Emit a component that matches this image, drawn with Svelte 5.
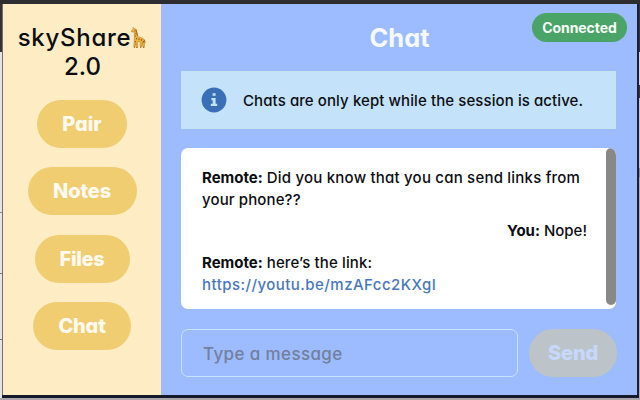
<script>
  const tabs = [
    { label: 'Pair', width: 90, spacing: -0.1 },
    { label: 'Notes', width: 109, spacing: -0.1 },
    { label: 'Files', width: 95, spacing: -0.3 },
    { label: 'Chat', width: 98, spacing: -0.2 }
  ];
</script>

<div class="desktop">
  <main class="window">
    <aside>
      <h1>
        <span class="brand">skyShare<svg class="giraffe" viewBox="0 0 15 22" aria-hidden="true">
          <path d="M2 1.2 3 2.6 5 3.2 6.6 10.5 12 12.2 13.7 15.5 13.2 21.2H11.9L11.5 16.5 10.3 21H9L9.2 16 6.8 15.4 6.5 21.5H5.2L4.8 16.5 4 21H2.8L3.4 12 3.2 6 .6 5.9.3 4.8 2.2 3Z" fill="#eab340" stroke="#b77720" stroke-width=".5" />
          <path d="M4 4.5v1M5 7v1.2M4.3 9.5v1M5.5 12v1.3M8 12.5v1.3M10.3 13.3v1.4M12.4 15v1.4M4.2 15v1" stroke="#8e4d17" stroke-width="1.1" />
          <path d="M5 3.5 6.8 10M13.2 13.5l1 3M2.9 21.3h1.2M5.2 21.6h1.4M9 21.3h1.3M12 21.3h1.3" stroke="#98561c" stroke-width=".8" fill="none" />
        </svg></span>
        <span class="version">2.0</span>
      </h1>
      <nav>
        {#each tabs as tab}
          <button style:width="{tab.width}px" style:letter-spacing="{tab.spacing}px">{tab.label}</button>
        {/each}
      </nav>
    </aside>
    <section>
      <header><h2>Chat</h2><span class="status">Connected</span></header>
      <div class="notice">
        <svg width="26" height="26" viewBox="0 0 26 26" aria-hidden="true">
          <circle cx="13" cy="13" r="12.4" fill="#386fb7" />
          <path d="M11.6 6.2h3v2.5h-3zM10.4 11h4.2v5.8h1.6V19h-6.4v-2.2h1.9v-3.6h-1.3z" fill="#c4e3fb" />
        </svg>
        <span>Chats are only kept while the session is active.</span>
      </div>
      <div class="log">
        <div class="messages">
          <p><b>Remote:</b> <span class="a">Did you know that you can send links from</span><br /><span class="b">your phone??</span></p>
          <p class="mine"><b>You:</b> Nope!</p>
          <p class="last"><b>Remote:</b> <span class="c">here’s the link:</span><br /><span class="link">https://youtu.be/mzAFcc2KXgI</span></p>
        </div>
        <div class="thumb"></div>
      </div>
      <form>
        <input placeholder="Type a message" />
        <button type="button" class="send">Send</button>
      </form>
    </section>
  </main>
</div>

<style>
  .desktop {
    box-sizing: border-box;
    width: 640px;
    height: 400px;
    padding: 4px 3px 5px;
    overflow: hidden;
    font-family: Inter, Roboto, sans-serif;
    font-feature-settings: 'cv11';
    color: #0b0d12;
    background:
      linear-gradient(#2d2c2f, #2d2c2f) 0 0 / 640px 4px no-repeat,
      linear-gradient(#aaa6aa, #aaa6aa) 0 398px / 640px 2px no-repeat,
      linear-gradient(#15192c, #15192c) 2px 395px / 637px 3px no-repeat,
      linear-gradient(#17213f, #17213f) 637px 0 / 2px 398px no-repeat,
      linear-gradient(#707070, #707070) 2px 0 / 1px 398px no-repeat,
      linear-gradient(#3a3338 52px, #d9d3d8 52px 85px, #4c3328 85px 98px, #c9c2c8 98px 168px, #8d8a92 168px 177px, #b3acb1 177px) 639px 0 / 1px 398px no-repeat,
      linear-gradient(#383236 52px, #e5e4e7 52px 212px, #888 212px 213px, #e5e4e7 213px 273px, #777 273px 274px, #e5e4e7 274px 339px, #777 339px 340px, #e5e4e7 340px);
  }
  .window { display: flex; height: 391px; }
  aside { width: 158px; background: #fdecc4; }
  h1, h2, p { margin: 0; }
  h1 {
    display: flex;
    flex-direction: column;
    align-items: center;
    padding-top: 19px;
    font-size: 24px;
    font-weight: 500;
    line-height: 29px;
  }
  .brand { display: flex; letter-spacing: 0.7px; }
  .version { padding-left: 1px; }
  .giraffe { width: 15px; height: 22px; margin-top: 3px; }
  nav { display: flex; flex-direction: column; align-items: center; gap: 19.4px; padding-top: 19px; }
  button {
    height: 48px;
    padding: 0;
    border: 0;
    border-radius: 24px;
    background: #f1cd72;
    color: #fffaf0;
    font: 800 20px/49px Inter, sans-serif;
    font-feature-settings: 'cv11';
  }
  section { flex: 1; padding: 0 20px; background: #9cbcff; }
  header { position: relative; height: 67px; padding-top: 18px; box-sizing: border-box; text-align: center; }
  h2 { padding-left: 1px; color: #f5f9ff; font-size: 25.5px; line-height: 32px; }
  .status {
    position: absolute;
    top: 9px;
    right: -10px;
    width: 95px;
    height: 29px;
    border-radius: 15px;
    background: #4aa367;
    color: #f6fff8;
    font-size: 14px;
    font-weight: 700;
    letter-spacing: -0.05px;
    line-height: 30px;
  }
  .notice {
    display: flex;
    align-items: center;
    gap: 16px;
    height: 58px;
    margin-right: 1px;
    padding-left: 20px;
    background: #c4e3fb;
    font-size: 15px;
    font-weight: 500;
    letter-spacing: 0.09px;
    white-space: nowrap;
  }
  .log {
    display: flex;
    height: 161px;
    margin: 19px 1px 20px 0;
    border-radius: 7px;
    background: #fff;
    overflow: hidden;
  }
  .messages { flex: 1; padding: 19px 19px 0 21px; font-size: 15px; font-weight: 500; line-height: 22px; white-space: nowrap; }
  .mine { margin: 9px 0 10px; text-align: right; }
  .last { line-height: 21.5px; }
  .a { letter-spacing: 0.21px; }
  .b, .c { letter-spacing: 0.12px; }
  .link { color: #4a78bd; letter-spacing: 0.46px; }
  .thumb { width: 10px; height: 157px; border-radius: 5px; background: #888886; }
  form { display: flex; gap: 11px; }
  input {
    box-sizing: border-box;
    width: 337px;
    height: 48px;
    padding: 1px 20px 0 21px;
    border: 1px solid #c8e2ff;
    border-radius: 7px;
    background: transparent;
    font: 500 17px Inter, sans-serif;
    font-feature-settings: 'cv11';
    letter-spacing: 0.38px;
  }
  input::placeholder { color: #737f9d; opacity: 1; }
  .send { width: 88px; background: #bcc4ca; color: #c6d8fc; letter-spacing: -0.2px; }
</style>
